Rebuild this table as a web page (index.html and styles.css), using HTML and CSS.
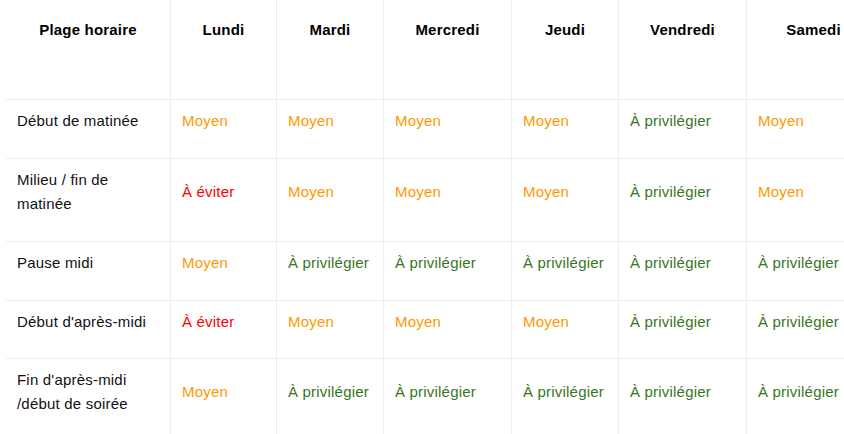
FILE: index.html
```html
<!DOCTYPE html>
<html lang="fr">
<head>
<meta charset="utf-8">
<title>Plages horaires</title>
<link rel="stylesheet" href="styles.css">
</head>
<body>
<div class="wrap">
<table class="schedule">
  <colgroup>
    <col class="c-slot"><col class="c-sm"><col class="c-sm2"><col class="c-lg"><col class="c-sm2"><col class="c-lg"><col class="c-xl">
  </colgroup>
  <thead>
    <tr>
      <th>Plage horaire</th><th>Lundi</th><th>Mardi</th><th>Mercredi</th><th>Jeudi</th><th>Vendredi</th><th>Samedi</th>
    </tr>
  </thead>
  <tbody>
    <tr>
      <td>Début de matinée</td>
      <td class="mid">Moyen</td><td class="mid">Moyen</td><td class="mid">Moyen</td><td class="mid">Moyen</td><td class="good">À privilégier</td><td class="mid">Moyen</td>
    </tr>
    <tr>
      <td>Milieu / fin de<br>matinée</td>
      <td class="bad">À éviter</td><td class="mid">Moyen</td><td class="mid">Moyen</td><td class="mid">Moyen</td><td class="good">À privilégier</td><td class="mid">Moyen</td>
    </tr>
    <tr>
      <td>Pause midi</td>
      <td class="mid">Moyen</td><td class="good">À privilégier</td><td class="good">À privilégier</td><td class="good">À privilégier</td><td class="good">À privilégier</td><td class="good">À privilégier</td>
    </tr>
    <tr class="short">
      <td>Début d'après-midi</td>
      <td class="bad">À éviter</td><td class="mid">Moyen</td><td class="mid">Moyen</td><td class="mid">Moyen</td><td class="good">À privilégier</td><td class="good">À privilégier</td>
    </tr>
    <tr>
      <td>Fin d'après-midi<br>/début de soirée</td>
      <td class="mid">Moyen</td><td class="good">À privilégier</td><td class="good">À privilégier</td><td class="good">À privilégier</td><td class="good">À privilégier</td><td class="good">À privilégier</td>
    </tr>
  </tbody>
</table>
</div>
</body>
</html>
```
FILE: styles.css
```css
html, body {
  margin: 0;
  padding: 0;
  background: #ffffff;
  overflow: hidden;
}
.wrap {
  padding-left: 6px;
  width: 900px;
}
.schedule {
  table-layout: fixed;
  border-collapse: separate;
  border-spacing: 0;
  width: 874px;
  font-family: "Liberation Sans", Arial, sans-serif;
  font-size: 15px;
  letter-spacing: 0.2px;
  line-height: 24px;
  color: #111111;
}
.c-slot { width: 164px; }
.c-sm { width: 106px; }
.c-sm2 { width: 107px; }
.c-lg { width: 128px; }
.c-xl { width: 134px; }
.schedule th,
.schedule td {
  box-sizing: border-box;
  border-bottom: 1px solid #ebebf3;
  text-align: left;
}
.schedule th + th,
.schedule td + td {
  border-left: 1px solid #ebebf3;
}
.schedule th {
  font-weight: bold;
  color: #000000;
  text-align: center;
  vertical-align: top;
  padding: 18px 11px 57px;
}
.schedule td {
  vertical-align: middle;
  padding: 9px 11px 25px;
}
.schedule tr.short td {
  padding-bottom: 24px;
}
.mid { color: #ff9900; }
.bad { color: #ff0000; }
.good { color: #38761d; }
```
